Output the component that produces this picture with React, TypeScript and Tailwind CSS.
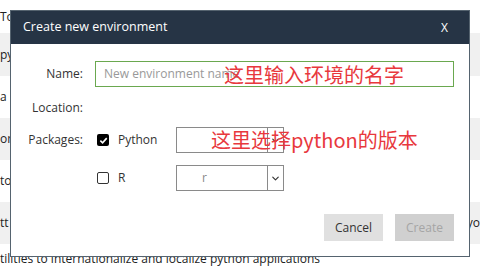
import React from 'react';
import { ChevronDown } from 'lucide-react';

const rows = [
  { text: 'Tools for building and installing python packages', h: 'h-[33px]', grey: false },
  { text: 'python utilities and helpers', h: 'h-[43px]', grey: true },
  { text: 'a library for rich text and beautiful formatting', h: 'h-[42px]', grey: false },
  { text: 'or', h: 'h-[42px]', grey: true },
  { text: 'to', h: 'h-[42px]', grey: false },
  { text: 'tt', right: 'yo', h: 'h-[42px]', grey: true },
  { text: 'tilities to internationalize and localize python applications', h: 'h-[23px] items-end', grey: false },
];

function Select({ value }: { value?: string }) {
  return (
    <div className="flex h-[26px] w-[108px] border border-[#8a8a8a] bg-white">
      <div className="flex flex-1 items-center pl-[25px] text-[12px] text-[#888]">{value}</div>
      <div className="flex w-[16px] items-center justify-center border-l border-[#8a8a8a]">
        <ChevronDown size={11} strokeWidth={2.5} className="text-[#333]" />
      </div>
    </div>
  );
}

function Checkbox({ checked }: { checked?: boolean }) {
  if (checked) {
    return (
      <div className="ml-[2px] flex h-[12px] w-[12px] items-center justify-center rounded-[2px] bg-black">
        <svg width="9" height="9" viewBox="0 0 10 10">
          <path d="M1.5 5.2 L4 7.6 L8.6 2.4" fill="none" stroke="white" strokeWidth="1.8" />
        </svg>
      </div>
    );
  }
  return <div className="ml-[2px] h-[12px] w-[12px] rounded-[2px] border-[1.5px] border-[#333]" />;
}

export default function App() {
  return (
    <div className="relative h-[267px] w-[480px] overflow-hidden bg-white font-['Open_Sans',sans-serif] text-[#222]">
      {/* list behind the modal */}
      <div className="flex flex-col">
        {rows.map((r, i) => (
          <div
            key={i}
            className={`flex ${r.h} items-center justify-between whitespace-nowrap text-[12px] leading-[16px] ${r.grey ? 'bg-[#f0f0f0]' : 'bg-white'}`}
          >
            <span>{r.text}</span>
            {r.right && <span>{r.right}</span>}
          </div>
        ))}
      </div>

      {/* modal */}
      <div className="absolute left-[10px] top-[10px] flex h-[247px] w-[460px] flex-col border border-[#55636f] bg-white">
        <div className="flex h-[33px] items-center justify-between bg-[#263445] pl-[12px] pr-[21px] text-[12.5px] text-white">
          <span>Create new environment</span>
          <span className="text-[12px]">X</span>
        </div>

        <div className="flex flex-col pr-[15px] text-[12px] text-[#333]">
          <div className="mt-[17px] flex h-[26px] items-center">
            <div className="w-[72px] text-right">Name:</div>
            <div className="ml-[12px] flex h-[26px] flex-1 items-center border border-[#6aa84f] pl-[8px] text-[#999]">
              New environment name
            </div>
          </div>

          <div className="mt-[8px] flex h-[26px] items-center">
            <div className="w-[72px] text-right">Location:</div>
          </div>

          <div className="mt-[6px] flex h-[26px] items-center">
            <div className="w-[72px] text-right">Packages:</div>
            <div className="ml-[12px] flex w-[81px] items-center">
              <Checkbox checked />
              <span className="ml-[9px]">Python</span>
            </div>
            <Select />
          </div>

          <div className="mt-[12px] flex h-[26px] items-center">
            <div className="w-[72px]" />
            <div className="ml-[12px] flex w-[81px] items-center">
              <Checkbox />
              <span className="ml-[9px]">R</span>
            </div>
            <Select value="r" />
          </div>

          <div className="mt-[23px] flex justify-end gap-[12px]">
            <button className="h-[27px] w-[59px] bg-[#e0e0e0] text-[12px] text-[#333]">Cancel</button>
            <button className="h-[27px] w-[59px] bg-[#d0d0d0] text-[12px] text-[#a5a5a5]">Create</button>
          </div>
        </div>

        {/* red annotations */}
        <div className="absolute left-[213px] top-[49px] whitespace-nowrap font-['Noto_Sans_CJK_SC',sans-serif] text-[20px] leading-[30px] text-[#e8383d]">
          这里输入环境的名字
        </div>
        <div className="absolute left-[200px] top-[114px] whitespace-nowrap font-['Noto_Sans_CJK_SC',sans-serif] text-[20px] leading-[30px] text-[#e8383d]">
          这里选择python的版本
        </div>
      </div>
    </div>
  );
}
